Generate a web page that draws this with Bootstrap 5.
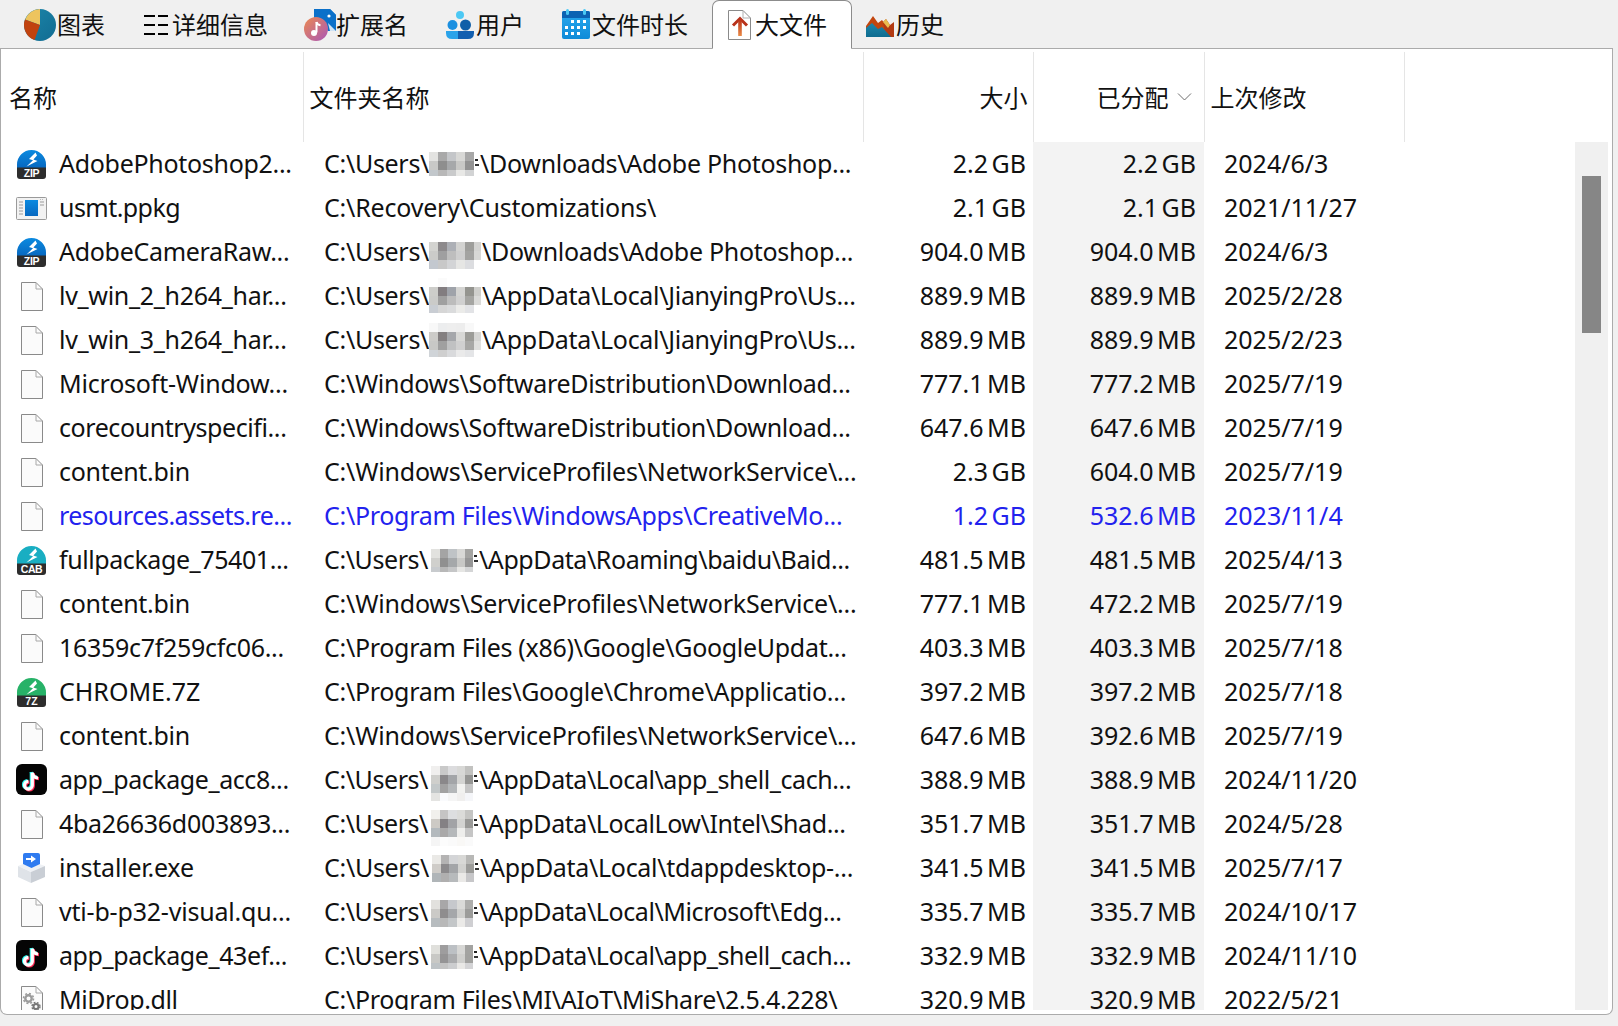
<!doctype html>
<html lang="zh-CN">
<head>
<meta charset="utf-8">
<title>大文件</title>
<link href="https://cdn.jsdelivr.net/npm/bootstrap@5.3.0/dist/css/bootstrap.min.css" rel="stylesheet">
<style>
html,body{height:100%}
body{margin:0;background:#f0f0f0;color:#111;font-family:"Noto Sans","Noto Sans CJK SC",sans-serif;overflow:hidden}
.sprite{display:block;width:0;height:0}
.app-shell{width:1618px;height:1026px;display:flex;flex-direction:column}
.tabbar.nav-tabs{height:49px;padding-left:10px;border-bottom:1px solid #ababab;margin-right:5px;flex-wrap:nowrap;flex:none;--bs-nav-tabs-border-width:1px}
.tabbar .nav-link{height:49px;display:flex;align-items:center;padding:0 21px 2px 13px;margin-bottom:-1px;color:#111;font-size:24px;line-height:1;border:1px solid transparent;border-radius:7px 7px 0 0;font-family:"Noto Sans CJK SC",sans-serif;background:transparent;white-space:nowrap}
.tabbar .nav-link.active{background:#fff;border-color:#8c8c8c #8c8c8c #fff;color:#111;margin-left:2px;padding-right:24px}
.tabbar svg{height:48px;flex:none;display:block;margin-top:2px}
.pane{flex:none;height:966px;margin-right:5px;background:#fff;border:1px solid #ababab;border-top:0;border-radius:0 0 7px 7px;display:flex;flex-direction:column;overflow:hidden}
.head-table,.body-table{table-layout:fixed;margin:0;--bs-table-bg:transparent;--bs-table-color:#111;--bs-table-border-color:transparent}
.head-table{width:1611px;margin-top:3px;flex:none}
.body-table{width:1574px}
.c1{width:302px}.c2{width:560px}.c3{width:170px}.c4{width:171px}.c5{width:200px}
.head-table th{height:90px;padding:0 5px 0 6px;vertical-align:middle;font-weight:400;font-size:24px;font-family:"Noto Sans CJK SC",sans-serif;line-height:1;border-right:1px solid #e5e5e5;border-bottom:0;box-shadow:none}
.head-table th:first-child{padding-left:8px}
.head-table th:last-child{border-right:0}
.head-table th.sort-col{padding-right:12px}
.chev{width:15px;height:10px;display:inline-block;margin-left:8px;vertical-align:5px}
.body-wrap{flex:1 1 auto;display:flex;min-height:0;padding:0 4px 4px 0}
.scroller{flex:1 1 auto;overflow:hidden;min-width:0}
.body-table td{height:44px;padding:0 0 2px;line-height:42px;font-size:25px;border:0;box-shadow:none;white-space:nowrap;overflow:hidden;vertical-align:top}
.body-table td.t-name{padding-left:15px}
.body-table td.t-path{padding-left:21px;letter-spacing:-.3px}
.body-table td.t-num{padding-right:7px;text-align:right;word-spacing:-3px}
.body-table td.t-alloc{padding-right:8px;text-align:right;background:#f3f3f3;word-spacing:-3px}
.body-table td.t-date{padding-left:20px}
.body-table .hit>td{color:#2222ee}
.body-table td.ls0{letter-spacing:0}
.body-table td.ls1{letter-spacing:-.2px}
.body-table td.ls2{letter-spacing:-.3px}
.body-table td.ls3{letter-spacing:-.42px}
.body-table td.ls4{letter-spacing:-.55px}
.f-icon{width:32px;height:32px;flex:none;margin:2px 11px 0 0;display:block}
.mos{width:51px;height:42px;display:inline-block;vertical-align:top;overflow:visible}
.mos.wide{width:53px}
.track{width:33px;flex:none;background:#f0f0f0;padding:34px 7px 0}
.thumb{height:157px;background:#868686}
</style>
</head>
<body>
<svg class="sprite" aria-hidden="true">
<defs>
<linearGradient id="gBlue" x1="0" y1="0" x2="0" y2="1"><stop offset="0" stop-color="#0b8ae0"/><stop offset="1" stop-color="#0768c0"/></linearGradient>
<linearGradient id="gPie" x1="0" y1="0" x2="1" y2="1"><stop offset="0" stop-color="#1b86aa"/><stop offset="1" stop-color="#126c92"/></linearGradient>
<linearGradient id="gMus" x1="0" y1="0" x2="1" y2="1"><stop offset="0" stop-color="#ec8a50"/><stop offset="1" stop-color="#a956b8"/></linearGradient>
<linearGradient id="gCal" x1="0" y1="0" x2="0" y2="1"><stop offset="0" stop-color="#2aa9ee"/><stop offset="1" stop-color="#0f8bd8"/></linearGradient>
<linearGradient id="gArr" x1="0" y1="0" x2="0" y2="1"><stop offset="0" stop-color="#b8301a"/><stop offset="1" stop-color="#ea8a45"/></linearGradient>
<linearGradient id="gMtn" x1="0" y1="0" x2="0" y2="1"><stop offset="0" stop-color="#1c86aa"/><stop offset="1" stop-color="#0f6c90"/></linearGradient>

<g id="i-file"><path d="M5.5 2.5H20L26.5 9V30.5H5.5Z" fill="#fbfbfb" stroke="#8a8a8a" stroke-width="1"/><path d="M20 2.5V9H26.5" fill="none" stroke="#a8a8a8" stroke-width="1"/></g>
<g id="i-bolt"><path d="M19.500 4.500 13 11 17 12.200 10.500 18.500 21.500 13 17.400 11.600 21 7.500Z" fill="#fff"/></g>
<g id="i-zip"><path d="M1 20V16.5a14.5 14.5 0 0 1 29 0V20Z" fill="url(#gBlue)"/><use href="#i-bolt"/><path d="M1 19.500H30V28a3 3 0 0 1-3 3H4a3 3 0 0 1-3-3Z" fill="#2d2d2d"/><text x="15.5" y="29.300" text-anchor="middle" font-family="Liberation Sans,sans-serif" font-size="10.500" font-weight="700" fill="#fff">ZIP</text></g>
<g id="i-cab"><path d="M1 20V16.5a14.5 14.5 0 0 1 29 0V20Z" fill="#19aec2"/><use href="#i-bolt"/><path d="M1 19.500H30V28a3 3 0 0 1-3 3H4a3 3 0 0 1-3-3Z" fill="#2d2d2d"/><text x="15.5" y="29.300" text-anchor="middle" font-family="Liberation Sans,sans-serif" font-size="10.500" font-weight="700" fill="#fff">CAB</text></g>
<g id="i-7z"><path d="M1 20V16.5a14.5 14.5 0 0 1 29 0V20Z" fill="#27b268"/><use href="#i-bolt"/><path d="M1 19.500H30V28a3 3 0 0 1-3 3H4a3 3 0 0 1-3-3Z" fill="#2d2d2d"/><text x="15.5" y="29.300" text-anchor="middle" font-family="Liberation Sans,sans-serif" font-size="10.500" font-weight="700" fill="#fff">7Z</text></g>
<g id="i-pkg"><rect x=".5" y="5.5" width="30" height="22" rx="1" fill="#f2f2f2" stroke="#9a9a9a"/><rect x="9" y="8" width="13" height="16" fill="url(#gBlue)"/><path d="M3 10h4M3 13h4M3 16h4M3 19h4M3 22h4M24 10h4M24 13h4" stroke="#9a9a9a" stroke-width="1"/><path d="M24 7.500h4" stroke="#bbb" stroke-dasharray="1 1"/></g>
<g id="i-tt"><rect x="0" y="0" width="31" height="31" rx="6" fill="#050505"/>
<g fill="none" stroke-width="3.200"><path d="M15.300 8V20.500a3.900 3.900 0 1 1-3.900-3.900" stroke="#25f4ee"/><path d="M15.300 8c.4 3.100 2.400 5 5.700 5.200" stroke="#25f4ee"/><path d="M17.300 9.500V22a3.900 3.900 0 1 1-3.900-3.900" stroke="#fe2c55"/><path d="M17.300 9.500c.4 3.100 2.400 5 5.700 5.200" stroke="#fe2c55"/><path d="M16.300 8.800V21.200a3.900 3.900 0 1 1-3.900-3.900" stroke="#fff"/><path d="M16.300 8.800c.4 3.100 2.400 5 5.700 5.200" stroke="#fff"/></g></g>
<g id="i-inst"><path d="M2 14 15 9 29 14 15.500 20Z" fill="#eef1f5"/><path d="M2 14V25L15 31V20Z" fill="#dfe3e8"/><path d="M29 14V25L15 31V20Z" fill="#c9ced5"/><path d="M7 3q0-2 2-2H22q2 0 2 2V12L15.500 16 7 12Z" fill="#2f7bf0"/><path d="M10 6h5V3.500L20 7 15 10.500V8H10Z" fill="#fff"/></g>
<g id="i-dll"><use href="#i-file"/><circle cx="12.500" cy="14.500" r="3.200" fill="none" stroke="#9b9b9b" stroke-width="2.400"/><circle cx="12.500" cy="14.500" r="5" fill="none" stroke="#9b9b9b" stroke-width="1.600" stroke-dasharray="2 1.900"/><circle cx="20" cy="22.500" r="2.500" fill="none" stroke="#777" stroke-width="2"/><circle cx="20" cy="22.500" r="4" fill="none" stroke="#777" stroke-width="1.400" stroke-dasharray="1.800 1.400"/></g>

<g id="m-f"><rect x="46" y="17" width="3" height="2" fill="#222"/><rect x="45.500" y="22" width="4" height="1.500" fill="#333"/></g>
<g id="m-a" shape-rendering="crispEdges"><rect x="0" y="10" width="9" height="9" fill="#e3e3e1"/><rect x="9" y="10" width="9" height="9" fill="#a9a9a9"/><rect x="18" y="10" width="9" height="9" fill="#c4c6c9"/><rect x="27" y="10" width="9" height="9" fill="#d8d8d6"/><rect x="36" y="10" width="9" height="9" fill="#a8a8a8"/><rect x="0" y="19" width="9" height="9" fill="#c9c9c7"/><rect x="9" y="19" width="9" height="9" fill="#8e8e8e"/><rect x="18" y="19" width="9" height="9" fill="#a6a8aa"/><rect x="27" y="19" width="9" height="9" fill="#c8c8c6"/><rect x="36" y="19" width="9" height="9" fill="#929292"/><rect x="0" y="28" width="9" height="6" fill="#c2c7cb"/><rect x="9" y="28" width="9" height="6" fill="#b8b8b8"/><rect x="18" y="28" width="9" height="6" fill="#c9cacb"/><rect x="27" y="28" width="9" height="6" fill="#e8e8e6"/><rect x="36" y="28" width="9" height="6" fill="#d2d3d4"/><use href="#m-f"/></g>
<g id="m-b" shape-rendering="crispEdges"><rect x="0" y="12" width="9" height="9" fill="#d3d3d0"/><rect x="9" y="12" width="9" height="9" fill="#8d8a8c"/><rect x="18" y="12" width="9" height="9" fill="#adb0b6"/><rect x="27" y="12" width="9" height="9" fill="#d3d3d1"/><rect x="36" y="12" width="9" height="9" fill="#9e9e9b"/><rect x="45" y="12" width="7" height="9" fill="#d4d4d2"/><rect x="0" y="21" width="9" height="9" fill="#cbcbc9"/><rect x="9" y="21" width="9" height="9" fill="#9f9fa0"/><rect x="18" y="21" width="9" height="9" fill="#bebebe"/><rect x="27" y="21" width="9" height="9" fill="#cfcfcf"/><rect x="36" y="21" width="9" height="9" fill="#a3a3a1"/><rect x="45" y="21" width="7" height="9" fill="#d8d8d6"/><rect x="0" y="30" width="9" height="9" fill="#c3c8cf"/><rect x="9" y="30" width="9" height="9" fill="#c8c8c8"/><rect x="18" y="30" width="9" height="9" fill="#d3d4d6"/><rect x="27" y="30" width="9" height="9" fill="#e6e6e4"/><rect x="36" y="30" width="9" height="9" fill="#dcdde0"/></g>
<g id="m-c" shape-rendering="crispEdges"><rect x="9" y="4" width="9" height="9" fill="#fbfbfb"/><rect x="0" y="13" width="9" height="9" fill="#cdcdca"/><rect x="9" y="13" width="9" height="9" fill="#827d80"/><rect x="18" y="13" width="9" height="9" fill="#9fa3aa"/><rect x="27" y="13" width="9" height="9" fill="#d4d4d2"/><rect x="36" y="13" width="9" height="9" fill="#94948f"/><rect x="45" y="13" width="7" height="9" fill="#cfcfcc"/><rect x="0" y="22" width="9" height="9" fill="#cbcbc9"/><rect x="9" y="22" width="9" height="9" fill="#a0a0a0"/><rect x="18" y="22" width="9" height="9" fill="#bcbcbc"/><rect x="27" y="22" width="9" height="9" fill="#d0d0d0"/><rect x="36" y="22" width="9" height="9" fill="#a5a5a2"/><rect x="45" y="22" width="7" height="9" fill="#dadad8"/><rect x="0" y="31" width="9" height="8" fill="#c9cdd3"/><rect x="9" y="31" width="9" height="8" fill="#d6d6d6"/><rect x="18" y="31" width="9" height="8" fill="#dadbdc"/><rect x="27" y="31" width="9" height="8" fill="#ebebe9"/><rect x="36" y="31" width="9" height="8" fill="#e2e3e6"/></g>
<g id="m-d" shape-rendering="crispEdges"><rect x="0" y="5" width="9" height="9" fill="#f8f8f8"/><rect x="9" y="5" width="9" height="9" fill="#ecedee"/><rect x="18" y="5" width="9" height="9" fill="#eeeeee"/><rect x="27" y="5" width="9" height="9" fill="#ededed"/><rect x="36" y="5" width="9" height="9" fill="#f8f8f8"/><rect x="0" y="14" width="9" height="9" fill="#cccbc8"/><rect x="9" y="14" width="9" height="9" fill="#837f80"/><rect x="18" y="14" width="9" height="9" fill="#a5a7ab"/><rect x="27" y="14" width="9" height="9" fill="#d8d8d6"/><rect x="36" y="14" width="9" height="9" fill="#9c9c98"/><rect x="45" y="14" width="7" height="9" fill="#d6d6d4"/><rect x="0" y="23" width="9" height="9" fill="#c8c8c6"/><rect x="9" y="23" width="9" height="9" fill="#a0a0a0"/><rect x="18" y="23" width="9" height="9" fill="#c0c1c2"/><rect x="27" y="23" width="9" height="9" fill="#d0d0d0"/><rect x="36" y="23" width="9" height="9" fill="#a8a8a6"/><rect x="45" y="23" width="7" height="9" fill="#e0e0de"/><rect x="0" y="32" width="9" height="7" fill="#d0d4d8"/><rect x="9" y="32" width="9" height="7" fill="#cfcfcf"/><rect x="18" y="32" width="9" height="7" fill="#d9dadc"/><rect x="27" y="32" width="9" height="7" fill="#eaeaea"/><rect x="36" y="32" width="9" height="7" fill="#e4e5e7"/></g>
<g id="m-e" shape-rendering="crispEdges"><rect x="3" y="11" width="9" height="9" fill="#e2e2df"/><rect x="12" y="11" width="8" height="9" fill="#a4a4a4"/><rect x="20" y="11" width="9" height="9" fill="#bfc3c6"/><rect x="29" y="11" width="8" height="9" fill="#d8d8d6"/><rect x="37" y="11" width="8" height="9" fill="#a4a4a2"/><rect x="3" y="20" width="9" height="9" fill="#d0d0cd"/><rect x="12" y="20" width="8" height="9" fill="#909090"/><rect x="20" y="20" width="9" height="9" fill="#a5a8aa"/><rect x="29" y="20" width="8" height="9" fill="#c8c8c6"/><rect x="37" y="20" width="8" height="9" fill="#969696"/><rect x="3" y="29" width="9" height="5" fill="#c8cbce"/><rect x="12" y="29" width="8" height="5" fill="#b8b8b8"/><rect x="20" y="29" width="9" height="5" fill="#c5c6c7"/><rect x="29" y="29" width="8" height="5" fill="#e6e6e4"/><rect x="37" y="29" width="8" height="5" fill="#d4d5d6"/><use href="#m-f"/></g>
<g id="m-g" shape-rendering="crispEdges"><rect x="3" y="8" width="9" height="9" fill="#f0efee"/><rect x="12" y="8" width="8" height="9" fill="#c9c9c9"/><rect x="20" y="8" width="9" height="9" fill="#dcdcde"/><rect x="29" y="8" width="8" height="9" fill="#d8d8d6"/><rect x="37" y="8" width="8" height="9" fill="#c2c2c0"/><rect x="3" y="17" width="9" height="9" fill="#cfcfcc"/><rect x="12" y="17" width="8" height="9" fill="#8a888a"/><rect x="20" y="17" width="9" height="9" fill="#a3a5a8"/><rect x="29" y="17" width="8" height="9" fill="#d4d4d2"/><rect x="37" y="17" width="8" height="9" fill="#969694"/><rect x="3" y="26" width="9" height="9" fill="#c3c8c9"/><rect x="12" y="26" width="8" height="9" fill="#a2a2a2"/><rect x="20" y="26" width="9" height="9" fill="#b4b7b9"/><rect x="29" y="26" width="8" height="9" fill="#f2f2f0"/><rect x="37" y="26" width="8" height="9" fill="#c6c6c6"/><rect x="3" y="35" width="9" height="8" fill="#e4e4e2"/><rect x="12" y="35" width="8" height="8" fill="#fafbfd"/><rect x="20" y="35" width="9" height="8" fill="#f5f5f5"/><rect x="29" y="35" width="8" height="8" fill="#f0efee"/><rect x="37" y="35" width="8" height="8" fill="#f5f6f9"/><use href="#m-f"/></g>
<g id="m-h" shape-rendering="crispEdges"><rect x="3" y="8" width="9" height="9" fill="#f1f0ed"/><rect x="12" y="8" width="8" height="9" fill="#c5c4c4"/><rect x="20" y="8" width="9" height="9" fill="#dddee0"/><rect x="29" y="8" width="8" height="9" fill="#dbdbd9"/><rect x="37" y="8" width="8" height="9" fill="#c5c5c3"/><rect x="3" y="17" width="9" height="9" fill="#cdcac5"/><rect x="12" y="17" width="8" height="9" fill="#848184"/><rect x="20" y="17" width="9" height="9" fill="#a2a3a6"/><rect x="29" y="17" width="8" height="9" fill="#d3d3d1"/><rect x="37" y="17" width="8" height="9" fill="#9a9a98"/><rect x="3" y="26" width="9" height="9" fill="#b3b9bd"/><rect x="12" y="26" width="8" height="9" fill="#aaa9a9"/><rect x="20" y="26" width="9" height="9" fill="#b5b8ba"/><rect x="29" y="26" width="8" height="9" fill="#eeeeec"/><rect x="37" y="26" width="8" height="9" fill="#c5c5c5"/><rect x="3" y="35" width="9" height="9" fill="#f5f5f5"/><rect x="12" y="35" width="8" height="9" fill="#fcfcfc"/><rect x="20" y="35" width="9" height="9" fill="#fafafa"/><rect x="29" y="35" width="8" height="9" fill="#f9f8f6"/><rect x="37" y="35" width="8" height="9" fill="#fafafa"/><use href="#m-f"/></g>
<g id="m-i" shape-rendering="crispEdges"><rect x="3" y="9" width="9" height="9" fill="#eae9e6"/><rect x="12" y="9" width="8" height="9" fill="#b4b3b3"/><rect x="20" y="9" width="9" height="9" fill="#d4d5d7"/><rect x="29" y="9" width="8" height="9" fill="#d8d8d6"/><rect x="37" y="9" width="8" height="9" fill="#b8b8b6"/><rect x="3" y="18" width="9" height="9" fill="#cfccc8"/><rect x="12" y="18" width="8" height="9" fill="#8c8a8c"/><rect x="20" y="18" width="9" height="9" fill="#a3a5a8"/><rect x="29" y="18" width="8" height="9" fill="#d1d1cf"/><rect x="37" y="18" width="8" height="9" fill="#9c9c9a"/><rect x="3" y="27" width="9" height="9" fill="#b0b5b8"/><rect x="12" y="27" width="8" height="9" fill="#b0afaf"/><rect x="20" y="27" width="9" height="9" fill="#b7babc"/><rect x="29" y="27" width="8" height="9" fill="#eae9e7"/><rect x="37" y="27" width="8" height="9" fill="#c7c7c9"/><use href="#m-f"/></g>
<g id="m-j" shape-rendering="crispEdges"><rect x="3" y="10" width="9" height="9" fill="#e2e1de"/><rect x="12" y="10" width="8" height="9" fill="#a8a7a8"/><rect x="20" y="10" width="9" height="9" fill="#c6c8cc"/><rect x="29" y="10" width="8" height="9" fill="#dadad8"/><rect x="37" y="10" width="8" height="9" fill="#aeaeac"/><rect x="3" y="19" width="9" height="9" fill="#cbcac7"/><rect x="12" y="19" width="8" height="9" fill="#8f8d8e"/><rect x="20" y="19" width="9" height="9" fill="#a5a7aa"/><rect x="29" y="19" width="8" height="9" fill="#cfcfcd"/><rect x="37" y="19" width="8" height="9" fill="#9c9c9a"/><rect x="3" y="28" width="9" height="9" fill="#b7bcbf"/><rect x="12" y="28" width="8" height="9" fill="#b8b8b8"/><rect x="20" y="28" width="9" height="9" fill="#c3c6c8"/><rect x="29" y="28" width="8" height="9" fill="#ebeae8"/><rect x="37" y="28" width="8" height="9" fill="#cfcfd2"/><use href="#m-f"/></g>
<g id="m-k" shape-rendering="crispEdges"><rect x="3" y="11" width="9" height="9" fill="#e0e0dc"/><rect x="12" y="11" width="8" height="9" fill="#9e9d9e"/><rect x="20" y="11" width="9" height="9" fill="#bcc0c4"/><rect x="29" y="11" width="8" height="9" fill="#d7d7d5"/><rect x="37" y="11" width="8" height="9" fill="#a3a3a1"/><rect x="3" y="20" width="9" height="9" fill="#c8c8c5"/><rect x="12" y="20" width="8" height="9" fill="#959495"/><rect x="20" y="20" width="9" height="9" fill="#abacae"/><rect x="29" y="20" width="8" height="9" fill="#cfcfcd"/><rect x="37" y="20" width="8" height="9" fill="#a2a2a0"/><rect x="3" y="29" width="9" height="6" fill="#bec3c6"/><rect x="12" y="29" width="8" height="6" fill="#c3c3c3"/><rect x="20" y="29" width="9" height="6" fill="#cccdcf"/><rect x="29" y="29" width="8" height="6" fill="#e9e8e6"/><rect x="37" y="29" width="8" height="6" fill="#d4d4d6"/><use href="#m-f"/></g>
</defs>
</svg>

<div class="app-shell">
<ul class="nav nav-tabs tabbar">
<li class="nav-item"><a class="nav-link" href="#"><svg width="33" viewBox="24 0 33 48"><circle cx="40" cy="24" r="16" fill="url(#gPie)"/><path d="M40 24V8A16 16 0 0 0 25 18.500Z" fill="#edc45e"/><path d="M40 24 25 18.500A16 16 0 0 0 34.500 39Z" fill="#c1430f"/></svg>图表</a></li>
<li class="nav-item"><a class="nav-link" href="#"><svg width="31" viewBox="141 0 31 48"><path d="M144 15h11M144 24h11M144 33h11M158 15h10M158 24h10M158 33h10" stroke="#000" stroke-width="2.200" fill="none"/></svg>详细信息</a></li>
<li class="nav-item"><a class="nav-link" href="#"><svg width="32" viewBox="304 0 32 48"><path d="M316 8H330L336 14V30H334L316 14Z" fill="#0a70c9"/><path d="M314 8H330L336 14V30L328 30 314 18Z" fill="#0a70c9"/><circle cx="329" cy="15" r="1.600" fill="#fff"/><path d="M328 22 336 30H330Z" fill="#cfe3f4"/><circle cx="316" cy="28" r="12" fill="url(#gMus)"/><path d="M316.500 21V31.500" stroke="#fff" stroke-width="2"/><path d="M316.500 21c.4 2 1.800 3 4 3.200" stroke="#fff" stroke-width="2" fill="none"/><circle cx="314" cy="32" r="3" fill="#fff"/></svg>扩展名</a></li>
<li class="nav-item"><a class="nav-link" href="#"><svg width="32" viewBox="444 0 32 48"><circle cx="460" cy="14" r="4" fill="#4cc8f4"/><circle cx="452.500" cy="24" r="5" fill="#1b8fe0"/><circle cx="465.500" cy="24" r="5.500" fill="#105fa8"/><path d="M446 30H460V38H452Q446 38 446 32Z" fill="#2aa3ea"/><path d="M458 30H474V32Q474 38 468 38H458Z" fill="#125fb0"/></svg>用户</a></li>
<li class="nav-item"><a class="nav-link" href="#"><svg width="32" viewBox="560 0 32 48"><rect x="562" y="10" width="28" height="28" rx="2" fill="url(#gCal)"/><path d="M562 17V12q0-2 2-2H588q2 0 2 2V17Z" fill="#0c62b2"/><rect x="566" y="8" width="3" height="6" rx="1.500" fill="#4cc8f4"/><rect x="583" y="8" width="3" height="6" rx="1.500" fill="#4cc8f4"/><path fill="#fff" d="M571 19h3v3h-3zM577 19h3v3h-3zM583 19h3v3h-3zM565 25h3v3h-3zM571 25h3v3h-3zM577 25h3v3h-3zM583 25h3v3h-3zM565 31h3v3h-3zM571 31h3v3h-3zM577 31h3v3h-3z"/></svg>文件时长</a></li>
<li class="nav-item"><a class="nav-link active" href="#"><svg width="29" viewBox="727 0 29 48"><path d="M729.500 9.500H744L751.500 17V38.500H729.500Z" fill="#fff" stroke="#8a8a8a"/><path d="M744 9.500V17H751.500" fill="none" stroke="#b0b0b0"/><path d="M734 24.500 741 17.500 748 24.500" stroke="#b8321b" stroke-width="3" fill="none"/><rect x="739.200" y="18" width="3.600" height="17" fill="url(#gArr)"/></svg>大文件</a></li>
<li class="nav-item"><a class="nav-link" href="#"><svg width="30" viewBox="866 0 30 48"><path d="M866 25 873 15 878 22 882 19 894 36H866Z" fill="#c2460f"/><path d="M883 21 886 18 890 24 894 21V36H886Z" fill="#b23a12"/><path d="M883 21 886 18 890 24 888 27Z" fill="#e9bd4f"/><path d="M866 36V27L872 22 878 28 882 26 891 36Z" fill="url(#gMtn)"/></svg>历史</a></li>
</ul>

<div class="pane">
<table class="table head-table">
<colgroup><col class="c1"><col class="c2"><col class="c3"><col class="c4"><col class="c5"><col></colgroup>
<thead><tr>
<th>名称</th><th>文件夹名称</th><th class="text-end">大小</th>
<th class="text-end sort-col">已分配<svg class="chev" viewBox="0 0 15 10"><path d="M1 1.500 7.500 8 14 1.500" fill="none" stroke="#6e6e6e" stroke-width="1"/></svg></th>
<th>上次修改</th><th></th>
</tr></thead>
</table>
<div class="body-wrap">
<div class="scroller">
<table class="table body-table">
<colgroup><col class="c1"><col class="c2"><col class="c3"><col class="c4"><col class="c5"><col></colgroup>
<tbody>
<tr><td class="t-name ls2"><div class="d-flex align-items-center"><svg class="f-icon" viewBox="0 0 32 32"><use href="#i-zip"/></svg>AdobePhotoshop2...</div></td><td class="t-path">C:\Users\<svg class="mos"><use href="#m-a"/></svg>\Downloads\Adobe Photoshop...</td><td class="t-num">2.2 GB</td><td class="t-alloc">2.2 GB</td><td class="t-date">2024/6/3</td><td></td></tr>
<tr><td class="t-name ls4"><div class="d-flex align-items-center"><svg class="f-icon" viewBox="0 0 32 32"><use href="#i-pkg"/></svg>usmt.ppkg</div></td><td class="t-path ls1">C:\Recovery\Customizations\</td><td class="t-num">2.1 GB</td><td class="t-alloc">2.1 GB</td><td class="t-date">2021/11/27</td><td></td></tr>
<tr><td class="t-name ls2"><div class="d-flex align-items-center"><svg class="f-icon" viewBox="0 0 32 32"><use href="#i-zip"/></svg>AdobeCameraRaw...</div></td><td class="t-path">C:\Users\<svg class="mos wide"><use href="#m-b"/></svg>\Downloads\Adobe Photoshop...</td><td class="t-num">904.0 MB</td><td class="t-alloc">904.0 MB</td><td class="t-date">2024/6/3</td><td></td></tr>
<tr><td class="t-name ls2"><div class="d-flex align-items-center"><svg class="f-icon" viewBox="0 0 32 32"><use href="#i-file"/></svg>lv_win_2_h264_har...</div></td><td class="t-path">C:\Users\<svg class="mos wide"><use href="#m-c"/></svg>\AppData\Local\JianyingPro\Us...</td><td class="t-num">889.9 MB</td><td class="t-alloc">889.9 MB</td><td class="t-date">2025/2/28</td><td></td></tr>
<tr><td class="t-name ls2"><div class="d-flex align-items-center"><svg class="f-icon" viewBox="0 0 32 32"><use href="#i-file"/></svg>lv_win_3_h264_har...</div></td><td class="t-path">C:\Users\<svg class="mos wide"><use href="#m-d"/></svg>\AppData\Local\JianyingPro\Us...</td><td class="t-num">889.9 MB</td><td class="t-alloc">889.9 MB</td><td class="t-date">2025/2/23</td><td></td></tr>
<tr><td class="t-name ls1"><div class="d-flex align-items-center"><svg class="f-icon" viewBox="0 0 32 32"><use href="#i-file"/></svg>Microsoft-Window...</div></td><td class="t-path">C:\Windows\SoftwareDistribution\Download...</td><td class="t-num">777.1 MB</td><td class="t-alloc">777.2 MB</td><td class="t-date">2025/7/19</td><td></td></tr>
<tr><td class="t-name ls3"><div class="d-flex align-items-center"><svg class="f-icon" viewBox="0 0 32 32"><use href="#i-file"/></svg>corecountryspecifi...</div></td><td class="t-path">C:\Windows\SoftwareDistribution\Download...</td><td class="t-num">647.6 MB</td><td class="t-alloc">647.6 MB</td><td class="t-date">2025/7/19</td><td></td></tr>
<tr><td class="t-name ls2"><div class="d-flex align-items-center"><svg class="f-icon" viewBox="0 0 32 32"><use href="#i-file"/></svg>content.bin</div></td><td class="t-path ls1">C:\Windows\ServiceProfiles\NetworkService\...</td><td class="t-num">2.3 GB</td><td class="t-alloc">604.0 MB</td><td class="t-date">2025/7/19</td><td></td></tr>
<tr class="hit"><td class="t-name ls4"><div class="d-flex align-items-center"><svg class="f-icon" viewBox="0 0 32 32"><use href="#i-file"/></svg>resources.assets.re...</div></td><td class="t-path">C:\Program Files\WindowsApps\CreativeMo...</td><td class="t-num">1.2 GB</td><td class="t-alloc">532.6 MB</td><td class="t-date">2023/11/4</td><td></td></tr>
<tr><td class="t-name ls3"><div class="d-flex align-items-center"><svg class="f-icon" viewBox="0 0 32 32"><use href="#i-cab"/></svg>fullpackage_75401...</div></td><td class="t-path ls3">C:\Users\<svg class="mos"><use href="#m-e"/></svg>\AppData\Roaming\baidu\Baid...</td><td class="t-num">481.5 MB</td><td class="t-alloc">481.5 MB</td><td class="t-date">2025/4/13</td><td></td></tr>
<tr><td class="t-name ls2"><div class="d-flex align-items-center"><svg class="f-icon" viewBox="0 0 32 32"><use href="#i-file"/></svg>content.bin</div></td><td class="t-path ls1">C:\Windows\ServiceProfiles\NetworkService\...</td><td class="t-num">777.1 MB</td><td class="t-alloc">472.2 MB</td><td class="t-date">2025/7/19</td><td></td></tr>
<tr><td class="t-name ls2"><div class="d-flex align-items-center"><svg class="f-icon" viewBox="0 0 32 32"><use href="#i-file"/></svg>16359c7f259cfc06...</div></td><td class="t-path">C:\Program Files (x86)\Google\GoogleUpdat...</td><td class="t-num">403.3 MB</td><td class="t-alloc">403.3 MB</td><td class="t-date">2025/7/18</td><td></td></tr>
<tr><td class="t-name ls0"><div class="d-flex align-items-center"><svg class="f-icon" viewBox="0 0 32 32"><use href="#i-7z"/></svg>CHROME.7Z</div></td><td class="t-path">C:\Program Files\Google\Chrome\Applicatio...</td><td class="t-num">397.2 MB</td><td class="t-alloc">397.2 MB</td><td class="t-date">2025/7/18</td><td></td></tr>
<tr><td class="t-name ls2"><div class="d-flex align-items-center"><svg class="f-icon" viewBox="0 0 32 32"><use href="#i-file"/></svg>content.bin</div></td><td class="t-path ls1">C:\Windows\ServiceProfiles\NetworkService\...</td><td class="t-num">647.6 MB</td><td class="t-alloc">392.6 MB</td><td class="t-date">2025/7/19</td><td></td></tr>
<tr><td class="t-name ls3"><div class="d-flex align-items-center"><svg class="f-icon" viewBox="0 0 32 32"><use href="#i-tt"/></svg>app_package_acc8...</div></td><td class="t-path ls3">C:\Users\<svg class="mos"><use href="#m-g"/></svg>\AppData\Local\app_shell_cach...</td><td class="t-num">388.9 MB</td><td class="t-alloc">388.9 MB</td><td class="t-date">2024/11/20</td><td></td></tr>
<tr><td class="t-name ls2"><div class="d-flex align-items-center"><svg class="f-icon" viewBox="0 0 32 32"><use href="#i-file"/></svg>4ba26636d003893...</div></td><td class="t-path ls3">C:\Users\<svg class="mos"><use href="#m-h"/></svg>\AppData\LocalLow\Intel\Shad...</td><td class="t-num">351.7 MB</td><td class="t-alloc">351.7 MB</td><td class="t-date">2024/5/28</td><td></td></tr>
<tr><td class="t-name ls1"><div class="d-flex align-items-center"><svg class="f-icon" viewBox="0 0 32 32"><use href="#i-inst"/></svg>installer.exe</div></td><td class="t-path">C:\Users\<svg class="mos"><use href="#m-i"/></svg>\AppData\Local\tdappdesktop-...</td><td class="t-num">341.5 MB</td><td class="t-alloc">341.5 MB</td><td class="t-date">2025/7/17</td><td></td></tr>
<tr><td class="t-name ls1"><div class="d-flex align-items-center"><svg class="f-icon" viewBox="0 0 32 32"><use href="#i-file"/></svg>vti-b-p32-visual.qu...</div></td><td class="t-path ls3">C:\Users\<svg class="mos"><use href="#m-j"/></svg>\AppData\Local\Microsoft\Edg...</td><td class="t-num">335.7 MB</td><td class="t-alloc">335.7 MB</td><td class="t-date">2024/10/17</td><td></td></tr>
<tr><td class="t-name ls3"><div class="d-flex align-items-center"><svg class="f-icon" viewBox="0 0 32 32"><use href="#i-tt"/></svg>app_package_43ef...</div></td><td class="t-path ls3">C:\Users\<svg class="mos"><use href="#m-k"/></svg>\AppData\Local\app_shell_cach...</td><td class="t-num">332.9 MB</td><td class="t-alloc">332.9 MB</td><td class="t-date">2024/11/10</td><td></td></tr>
<tr><td class="t-name ls3"><div class="d-flex align-items-center"><svg class="f-icon" viewBox="0 0 32 32"><use href="#i-dll"/></svg>MiDrop.dll</div></td><td class="t-path">C:\Program Files\MI\AIoT\MiShare\2.5.4.228\</td><td class="t-num">320.9 MB</td><td class="t-alloc">320.9 MB</td><td class="t-date">2022/5/21</td><td></td></tr>
</tbody>
</table>
</div>
<div class="track"><div class="thumb"></div></div>
</div>
</div>
</div>
<script src="https://cdn.jsdelivr.net/npm/bootstrap@5.3.0/dist/js/bootstrap.bundle.min.js"></script>
</body>
</html>
